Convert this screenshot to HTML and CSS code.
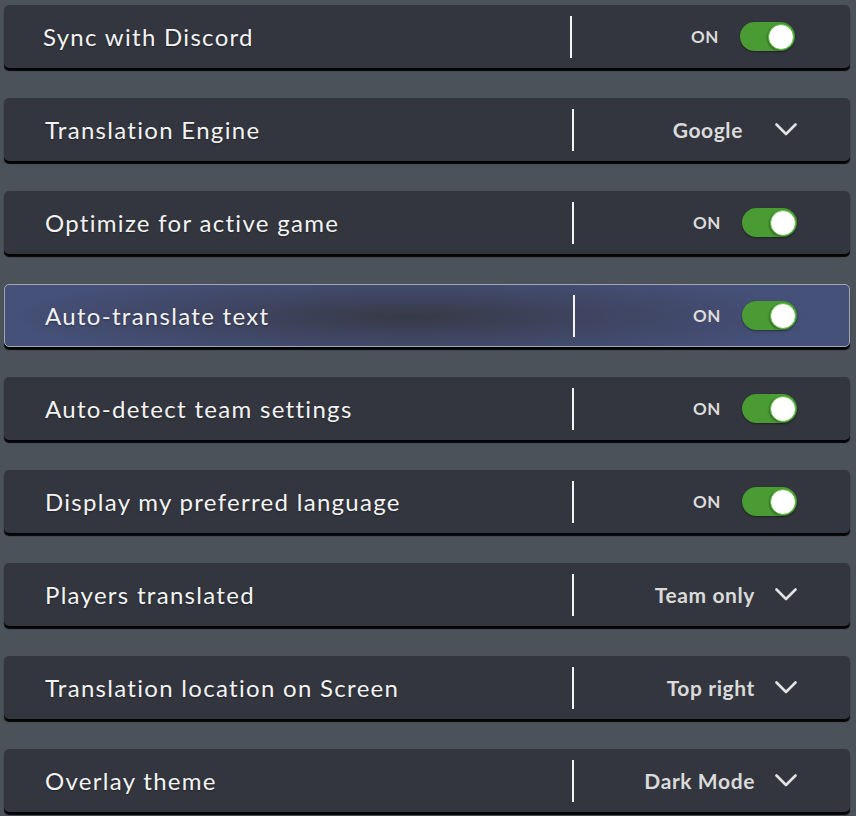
FILE: index.html
```html
<!DOCTYPE html>
<html lang="en">
<head>
<meta charset="utf-8">
<title>Settings</title>
<link rel="stylesheet" href="styles.css">
</head>
<body>
<div class="list">
  <div class="row row--first">
    <div class="label">Sync with Discord</div>
    <div class="divider"></div>
    <div class="control"><span class="state">ON</span><span class="toggle"><span class="knob"></span></span></div>
  </div>
  <div class="row">
    <div class="label">Translation Engine</div>
    <div class="divider"></div>
    <div class="control"><span class="value value--short">Google</span><svg class="chevron" viewBox="0 0 22 13" width="22" height="13"><polyline points="1.5,1.5 11,11 20.5,1.5"/></svg></div>
  </div>
  <div class="row">
    <div class="label">Optimize for active game</div>
    <div class="divider"></div>
    <div class="control"><span class="state">ON</span><span class="toggle"><span class="knob"></span></span></div>
  </div>
  <div class="row row--active">
    <div class="label">Auto-translate text</div>
    <div class="divider"></div>
    <div class="control"><span class="state">ON</span><span class="toggle"><span class="knob"></span></span></div>
  </div>
  <div class="row">
    <div class="label">Auto-detect team settings</div>
    <div class="divider"></div>
    <div class="control"><span class="state">ON</span><span class="toggle"><span class="knob"></span></span></div>
  </div>
  <div class="row">
    <div class="label">Display my preferred language</div>
    <div class="divider"></div>
    <div class="control"><span class="state">ON</span><span class="toggle"><span class="knob"></span></span></div>
  </div>
  <div class="row">
    <div class="label">Players translated</div>
    <div class="divider"></div>
    <div class="control"><span class="value">Team only</span><svg class="chevron" viewBox="0 0 22 13" width="22" height="13"><polyline points="1.5,1.5 11,11 20.5,1.5"/></svg></div>
  </div>
  <div class="row">
    <div class="label">Translation location on Screen</div>
    <div class="divider"></div>
    <div class="control"><span class="value">Top right</span><svg class="chevron" viewBox="0 0 22 13" width="22" height="13"><polyline points="1.5,1.5 11,11 20.5,1.5"/></svg></div>
  </div>
  <div class="row">
    <div class="label">Overlay theme</div>
    <div class="divider"></div>
    <div class="control"><span class="value">Dark Mode</span><svg class="chevron" viewBox="0 0 22 13" width="22" height="13"><polyline points="1.5,1.5 11,11 20.5,1.5"/></svg></div>
  </div>
</div>
</body>
</html>
```
FILE: styles.css
```css
html, body {
  margin: 0;
  padding: 0;
  background: #4b525a;
}
body {
  font-family: Lato, "Noto Sans", sans-serif;
  color: #f2f2f2;
  height: 816px;
  overflow: hidden;
}
.list {
  display: flex;
  flex-direction: column;
  gap: 30px;
  padding: 5px 6px 0 4px;
}
.row {
  box-sizing: border-box;
  height: 63px;
  background: #33363e;
  border-radius: 5px;
  box-shadow: 0 3px 1px rgba(0, 0, 0, 0.95);
  display: grid;
  grid-template-columns: 568px 2px 1fr;
  align-items: center;
}
.row--first {
  grid-template-columns: 566px 2px 1fr;
}
.row--first .label {
  padding-left: 39px;
}
.row--first .control {
  padding-right: 55px;
}
.row--active {
  background:
    radial-gradient(ellipse 420px 44px at 48% 52%, rgba(54, 56, 66, 0.95) 0%, rgba(58, 61, 80, 0.65) 40%, rgba(70, 81, 122, 0) 100%),
    #46517a;
  border: 1px solid #a3a7b4;
}
.row--active .label { padding-left: 40px; }
.row--active .control { padding-right: 52px; }
.label {
  padding-left: 41px;
  font-size: 24px;
  letter-spacing: 1.3px;
  color: #f3f3f3;
  text-shadow: 0 1px 2px rgba(0, 0, 0, 0.35);
  white-space: nowrap;
}
.divider {
  width: 2px;
  height: 42px;
  background: #f4f4f4;
}
.control {
  display: flex;
  justify-content: flex-end;
  align-items: center;
  padding-right: 53px;
}
.state {
  font-weight: 700;
  font-size: 17px;
  color: #dcdcdc;
  margin-right: 21px;
  letter-spacing: 0.6px;
}
.toggle {
  box-sizing: border-box;
  width: 55px;
  height: 29px;
  border-radius: 15px;
  background: #4a9b34;
  display: flex;
  justify-content: flex-end;
  align-items: center;
  padding-right: 1px;
  box-shadow: 0 1px 2px rgba(0, 0, 0, 0.4);
}
.knob {
  box-sizing: border-box;
  width: 26px;
  height: 26px;
  border-radius: 50%;
  background: #ffffff;
  border: 1px solid #5cbd3f;
  box-shadow: -1px 1px 2px rgba(0, 0, 0, 0.3);
}
.value {
  font-weight: 700;
  font-size: 21px;
  color: #dadada;
  margin-right: 20px;
  letter-spacing: 0.6px;
}
.value--short {
  margin-right: 32px;
}
.chevron {
  fill: none;
  stroke: #e2e2e2;
  stroke-width: 2.6;
  stroke-linecap: round;
  stroke-linejoin: round;
}
```
